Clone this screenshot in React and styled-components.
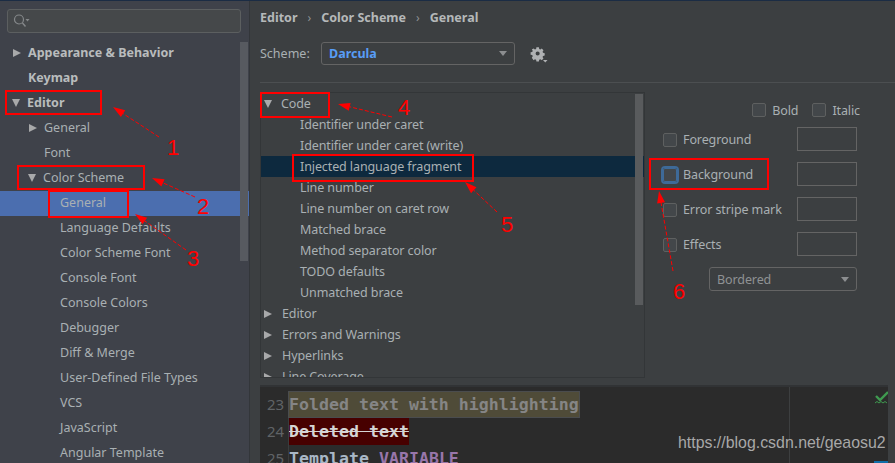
import React from "react";
import styled, { createGlobalStyle } from "styled-components";

const Global = createGlobalStyle`
  html, body { margin: 0; padding: 0; background: #3c3f41; }
  #root { width: 895px; height: 463px; overflow: hidden; }
  * { box-sizing: border-box; }
`;

const Page = styled.div`
  position: relative;
  width: 895px;
  height: 463px;
  display: flex;
  overflow: hidden;
  border-top: 1px solid #1b2c44;
  background: #3c3f41;
  font-family: "Noto Sans", "Open Sans", sans-serif;
  font-size: 12.5px;
  color: #a9b0b3;
`;

const Sidebar = styled.aside`
  position: relative;
  width: 250px;
  flex: none;
  background: #3f424a;
  border-right: 1px solid #33363a;
  padding-top: 8px;
`;

const Search = styled.div`
  margin-left: 7px;
  width: 234px;
  height: 24px;
  border: 1px solid #5c5f60;
  border-radius: 3px;
  background: #45484a;
  display: flex;
  align-items: center;
  padding-left: 5px;
  color: #85888a;
`;

const Tree = styled.div`
  margin-top: 8px;
  display: flex;
  flex-direction: column;
`;

const TreeRow = styled.div`
  height: 25px;
  display: flex;
  align-items: center;
  padding-left: ${(p) => p.$indent}px;
  padding-bottom: 2px;
  background: ${(p) => (p.$selected ? "#4b6eaf" : "transparent")};
  font-weight: ${(p) => (p.$bold ? 700 : 400)};
  color: ${(p) => (p.$bold ? "#b9bcbd" : "#a9b0b3")};
  white-space: nowrap;
`;

const Tri = styled.span`
  flex: none;
  width: 0;
  height: 0;
  ${(p) =>
    p.$open
      ? `border-left: 4.5px solid transparent; border-right: 4.5px solid transparent; border-top: 8px solid #a8a9aa;`
      : `border-top: 4.5px solid transparent; border-bottom: 4.5px solid transparent; border-left: 8px solid #a8a9aa;`}
  margin-right: ${(p) => p.$gap}px;
`;

const SideScroll = styled.div`
  position: absolute;
  left: 240px;
  top: 41px;
  width: 8px;
  height: 219px;
  background: #575a60;
`;

const Content = styled.main`
  flex: 1;
  min-width: 0;
  display: flex;
  flex-direction: column;
  padding-left: 10px;
`;

const Crumbs = styled.div`
  height: 33px;
  display: flex;
  align-items: center;
  gap: 10px;
  font-weight: 700;
  color: #b5b8b9;
`;

const CrumbSep = styled.span`
  font-weight: 400;
  color: #8f9294;
  font-size: 12px;
`;

const SchemeRow = styled.div`
  height: 39px;
  display: flex;
  align-items: center;
`;

const SchemeLabel = styled.span`
  width: 61px;
`;

const Select = styled.div`
  width: ${(p) => p.$w}px;
  height: ${(p) => p.$h}px;
  border: 1px solid #646464;
  border-radius: 3px;
  background: #3c3f41;
  display: flex;
  align-items: center;
  justify-content: space-between;
  padding: 0 7px;
  color: ${(p) => p.$color};
  font-weight: ${(p) => (p.$bold ? 700 : 400)};
`;

const Caret = styled.span`
  width: 0;
  height: 0;
  border-left: 4.5px solid transparent;
  border-right: 4.5px solid transparent;
  border-top: 5px solid #8c8e90;
`;

const Gear = styled.svg`
  margin-left: 15px;
  margin-top: 3px;
`;

const Rule = styled.div`
  height: 1px;
  margin-top: 9px;
  background: #4c4f51;
`;

const Columns = styled.div`
  margin-top: 9px;
  display: flex;
  height: 286px;
`;

const ListPanel = styled.div`
  position: relative;
  width: 385px;
  height: 286px;
  flex: none;
  border: 1px solid #333638;
  overflow: hidden;
  background: #3c3f41;
  letter-spacing: -0.1px;
`;

const ListRow = styled.div`
  height: 21px;
  display: flex;
  align-items: center;
  padding-left: ${(p) => p.$indent}px;
  background: ${(p) => (p.$selected ? "#0d293e" : "transparent")};
  white-space: nowrap;
`;

const ListScroll = styled.div`
  position: absolute;
  left: 374px;
  top: 1px;
  width: 8px;
  height: 211px;
  background: #595b5d;
`;

const Options = styled.div`
  width: 250px;
  flex: none;
  display: flex;
  flex-direction: column;
  letter-spacing: -0.1px;
`;

const StyleRow = styled.div`
  height: 30px;
  padding-top: 6px;
  padding-right: 35px;
  display: flex;
  align-items: center;
  justify-content: flex-end;
  gap: 6px;
`;

const Check = styled.span`
  flex: none;
  width: 14px;
  height: 14px;
  border: 1px solid #5e6060;
  border-radius: 2px;
  background: #43474a;
  ${(p) => p.$focus && `outline: 2px solid #3e6a98; outline-offset: 0; border-color: #3e6a98;`}
`;

const StyleGap = styled.span`
  width: 2px;
`;

const AttrRow = styled.div`
  height: 35px;
  display: flex;
  align-items: center;
  padding-left: 18px;
  gap: 6px;
`;

const AttrLabel = styled.span`
  flex: 1;
`;

const Swatch = styled.span`
  flex: none;
  width: 60px;
  height: 24px;
  margin-top: -1px;
  border: 1px solid #646464;
  margin-right: 38px;
`;

const EffectRow = styled.div`
  margin-top: 5px;
  padding-left: 64px;
`;

const Preview = styled.section`
  position: relative;
  margin-top: 7px;
  width: 628px;
  flex: 1;
  background: #2b2b2b;
  border-top: 2px solid #313335;
  display: flex;
  flex-direction: column;
  padding-top: 4px;
  font-family: "DejaVu Sans Mono", "Liberation Mono", monospace;
  font-size: 16.6px;
  font-weight: 700;
  overflow: hidden;
`;

const CodeLine = styled.div`
  height: 27px;
  flex: none;
  display: flex;
  align-items: center;
`;

const LineNo = styled.span`
  width: 29px;
  flex: none;
  padding-left: 7px;
  font-family: "Noto Sans", sans-serif;
  font-weight: 400;
  font-size: 15px;
  color: #606366;
  border-right: 1px solid #3a3c3d;
  height: 27px;
  line-height: 27px;
`;

const Folded = styled.span`
  background: #4f4b38;
  color: #858585;
  outline: 1px solid #4a4c4e;
  height: 25px;
  line-height: 25px;
  display: block;
`;

const Deleted = styled.span`
  background: #470000;
  color: #d5d5d5;
  height: 27px;
  line-height: 27px;
  text-decoration: line-through;
`;

const Plain = styled.span`
  color: ${(p) => p.$color};
  margin-left: ${(p) => p.$gap || 0}px;
`;

const MarginLine = styled.div`
  position: absolute;
  left: 529px;
  top: 0;
  bottom: 0;
  width: 1px;
  background: #3d3f40;
`;

const Status = styled.svg`
  position: absolute;
  left: 614px;
  top: 3px;
`;

const BlueMark = styled.div`
  position: absolute;
  right: 0;
  bottom: 0;
  width: 14px;
  height: 2px;
  background: #0f6ea8;
`;

const Watermark = styled.div`
  position: absolute;
  left: 678px;
  top: 433px;
  font-family: "Liberation Sans", Arial, sans-serif;
  font-size: 15.9px;
  font-weight: 400;
  color: #a8a8a8;
  white-space: nowrap;
`;

const Notes = styled.svg`
  position: absolute;
  left: 0;
  top: -1px;
  pointer-events: none;
`;

const NoteText = styled.text`
  font-family: "Liberation Sans", Arial, sans-serif;
  font-size: 22px;
  fill: #ff0000;
`;

const side = [
  ["Appearance & Behavior", 13, true, "r"],
  ["Keymap", 28, true],
  ["Editor", 12, true, "o"],
  ["General", 29, false, "r"],
  ["Font", 44, false],
  ["Color Scheme", 28, false, "o"],
  ["General", 60, false, null, true],
  ["Language Defaults", 60],
  ["Color Scheme Font", 60],
  ["Console Font", 60],
  ["Console Colors", 60],
  ["Debugger", 60],
  ["Diff & Merge", 60],
  ["User-Defined File Types", 60],
  ["VCS", 60],
  ["JavaScript", 60],
  ["Angular Template", 60],
];

const list = [
  ["Code", 3, "o"],
  ["Identifier under caret", 39],
  ["Identifier under caret (write)", 39],
  ["Injected language fragment", 39, null, true],
  ["Line number", 39],
  ["Line number on caret row", 39],
  ["Matched brace", 39],
  ["Method separator color", 39],
  ["TODO defaults", 39],
  ["Unmatched brace", 39],
  ["Editor", 3, "r"],
  ["Errors and Warnings", 3, "r"],
  ["Hyperlinks", 3, "r"],
  ["Line Coverage", 3, "r"],
];

const boxes = [
  [6, 91, 95, 23],
  [18, 166, 126, 23],
  [49, 191, 79, 26],
  [261, 93, 68, 24],
  [293, 155, 180, 26],
  [650, 159, 118, 30],
];

const arrows = [
  [159, 137, 113, 107],
  [195, 197, 152, 178],
  [186, 250, 135, 214],
  [392, 117, 338, 104],
  [497, 212, 465, 182],
  [673, 271, 659, 191],
];

const nums = [
  ["1", 167, 155],
  ["2", 197, 214],
  ["3", 187, 266],
  ["4", 398, 115],
  ["5", 501, 232],
  ["6", 673, 299],
];

function ArrowNote({ a }) {
  const [x1, y1, x2, y2] = a;
  const len = Math.hypot(x2 - x1, y2 - y1);
  const ux = (x2 - x1) / len;
  const uy = (y2 - y1) / len;
  const bx = x2 - ux * 12;
  const by = y2 - uy * 12;
  const pts = `${x2},${y2} ${bx - uy * 4},${by + ux * 4} ${bx + uy * 4},${by - ux * 4}`;
  return (
    <g>
      <line x1={x1} y1={y1} x2={bx} y2={by} stroke="#ff0000" strokeWidth="1" strokeDasharray="4 2" />
      <polygon points={pts} fill="#ff0000" />
    </g>
  );
}

export default function App() {
  return (
    <Page>
      <Global />
      <Sidebar>
        <Search>
          <svg width="18" height="16" viewBox="0 0 18 16" fill="none" stroke="#85888a">
            <circle cx="6" cy="6.5" r="4.5" strokeWidth="1.2" />
            <line x1="9.5" y1="10" x2="12.5" y2="13.5" strokeWidth="1.4" />
            <path d="M12.5 6h4l-2 2.500z" fill="#85888a" stroke="none" />
          </svg>
        </Search>
        <Tree>
          {side.map(([t, ind, bold, tri, sel], i) => (
            <TreeRow key={i} $indent={ind} $bold={bold} $selected={sel}>
              {tri && <Tri $open={tri === "o"} $gap={7} />}
              {t}
            </TreeRow>
          ))}
        </Tree>
        <SideScroll />
      </Sidebar>
      <Content>
        <Crumbs>
          <span>Editor</span>
          <CrumbSep>›</CrumbSep>
          <span>Color Scheme</span>
          <CrumbSep>›</CrumbSep>
          <span>General</span>
        </Crumbs>
        <SchemeRow>
          <SchemeLabel>Scheme:</SchemeLabel>
          <Select $w={194} $h={23} $color="#589df6" $bold>
            Darcula
            <Caret />
          </Select>
          <Gear width="18" height="18" viewBox="0 0 18 18">
            <path
              fill="#afb1b3"
              fillRule="evenodd"
              d="M6 1h3l.4 2 1.400.6 1.700-1.100 2.100 2.100-1.100 1.700.6 1.400 2 .4v3l-2 .4-.6 1.400 1.100 1.700-2.100 2.100-1.700-1.100-1.400.6-.4 2H6l-.4-2-1.400-.6-1.700 1.100L.4 13.600l1.100-1.700-.6-1.400-2-.4v-3l2-.4.6-1.400-1.100-1.700L2.500 2.500l1.700 1.100 1.400-.6zM7.500 6a2.500 2.500 0 1 0 0 5 2.500 2.500 0 0 0 0-5z"
              transform="translate(1.500 0.500) scale(.82)"
            />
            <path d="M13 14h4.500l-2.250 2.500z" fill="#afb1b3" />
          </Gear>
        </SchemeRow>
        <Rule />
        <Columns>
          <ListPanel>
            {list.map(([t, ind, tri, sel], i) => (
              <ListRow key={i} $indent={ind} $selected={sel}>
                {tri && <Tri $open={tri === "o"} $gap={tri === "o" ? 9 : 10} />}
                {t}
              </ListRow>
            ))}
            <ListScroll />
          </ListPanel>
          <Options>
            <StyleRow>
              <Check />
              <span>Bold</span>
              <StyleGap />
              <Check />
              <span>Italic</span>
            </StyleRow>
            {["Foreground", "Background", "Error stripe mark", "Effects"].map((t) => (
              <AttrRow key={t}>
                <Check $focus={t === "Background"} />
                <AttrLabel>{t}</AttrLabel>
                <Swatch />
              </AttrRow>
            ))}
            <EffectRow>
              <Select $w={148} $h={24} $color="#8f9294">
                Bordered
                <Caret />
              </Select>
            </EffectRow>
          </Options>
        </Columns>
        <Preview>
          <MarginLine />
          <CodeLine>
            <LineNo>23</LineNo>
            <Plain>
              <Folded>Folded text with highlighting</Folded>
            </Plain>
          </CodeLine>
          <CodeLine>
            <LineNo>24</LineNo>
            <Deleted>Deleted text</Deleted>
          </CodeLine>
          <CodeLine>
            <LineNo>25</LineNo>
            <Plain $color="#a9b7c6">Template</Plain>
            <Plain $color="#9876aa" $gap={10}>VARIABLE</Plain>
          </CodeLine>
          <Status width="16" height="18" viewBox="0 0 16 18" fill="none" stroke="#3f9a50">
            <path d="M2 6l4 4 8-8" strokeWidth="2.400" />
            <path d="M1 13l2-1.500 2 1.500 2-1.500 2 1.500 2-1.500 2 1.500" strokeWidth="1" />
          </Status>
          <BlueMark />
        </Preview>
      </Content>
      <Watermark>https://blog.csdn.net/geaosu2</Watermark>
      <Notes width="895" height="463" viewBox="0 0 895 463" fill="none">
        {boxes.map(([x, y, w, h], i) => (
          <rect key={i} x={x} y={y} width={w} height={h} stroke="#ff0000" strokeWidth="2" />
        ))}
        {arrows.map((a, i) => (
          <ArrowNote key={i} a={a} />
        ))}
        {nums.map(([t, x, y]) => (
          <NoteText key={t} x={x} y={y}>{t}</NoteText>
        ))}
      </Notes>
    </Page>
  );
}
